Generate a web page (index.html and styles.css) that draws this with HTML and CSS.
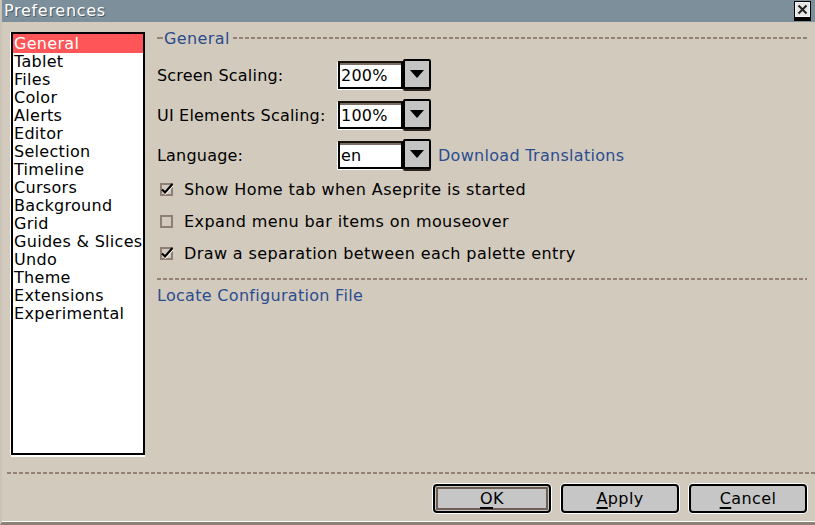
FILE: index.html
```html
<!DOCTYPE html>
<html lang="en">
<head>
    <meta charset="UTF-8">
    <title>Preferences</title>
    <link rel="stylesheet" href="styles.css">
</head>
<body>
    <div class="window">
        <!-- Title bar -->
        <div class="titlebar">
            <span class="title">Preferences</span>
            <span class="close">
                <svg width="18" height="20" viewBox="0 0 18 20">
                    <rect x="0" y="2" width="17" height="18" fill="#000"/>
                    <rect x="0.5" y="0.5" width="16" height="16" fill="#f4f4f4" stroke="#000"/>
                    <rect x="2" y="2" width="13" height="13" fill="#e6e6e6"/>
                    <path d="M4.5 4.5 L12.5 12.5 M12.5 4.5 L4.5 12.5" stroke="#222" stroke-width="2"/>
                </svg>
            </span>
        </div>

        <div class="content">
            <ul class="sections">
                <li class="selected">General</li>
                <li>Tablet</li>
                <li>Files</li>
                <li>Color</li>
                <li>Alerts</li>
                <li>Editor</li>
                <li>Selection</li>
                <li>Timeline</li>
                <li>Cursors</li>
                <li>Background</li>
                <li>Grid</li>
                <li>Guides &amp; Slices</li>
                <li>Undo</li>
                <li>Theme</li>
                <li>Extensions</li>
                <li>Experimental</li>
            </ul>

            <div class="panel">
                <div class="group-title"><span>General</span></div>

                <div class="form">
                    <label>Screen Scaling:</label>
                    <div class="combo">
                        <span class="entry">200%</span>
                        <span class="drop"><svg width="14" height="8" viewBox="0 0 14 8"><polygon points="0,0 14,0 7,8" fill="#000"/></svg></span>
                    </div>
                    <span></span>

                    <label>UI Elements Scaling:</label>
                    <div class="combo">
                        <span class="entry">100%</span>
                        <span class="drop"><svg width="14" height="8" viewBox="0 0 14 8"><polygon points="0,0 14,0 7,8" fill="#000"/></svg></span>
                    </div>
                    <span></span>

                    <label>Language:</label>
                    <div class="combo">
                        <span class="entry">en</span>
                        <span class="drop"><svg width="14" height="8" viewBox="0 0 14 8"><polygon points="0,0 14,0 7,8" fill="#000"/></svg></span>
                    </div>
                    <a class="link" href="#">Download Translations</a>
                </div>

                <div class="checks">
                    <div class="check">
                        <svg class="box" width="16" height="16" viewBox="0 0 16 16">
                            <rect x="2" y="3" width="11" height="11" fill="none" stroke="#8e7e73" stroke-width="2"/>
                            <path d="M3.5 9.5 L6.5 12.5 L14 4" fill="none" stroke="#fff" stroke-width="2"/>
                            <path d="M3 8.5 L6 11.5 L13.5 3" fill="none" stroke="#000" stroke-width="2.2"/>
                        </svg>
                        <span>Show Home tab when Aseprite is started</span>
                    </div>
                    <div class="check">
                        <svg class="box" width="16" height="16" viewBox="0 0 16 16">
                            <rect x="2" y="3" width="11" height="11" fill="none" stroke="#8e7e73" stroke-width="2"/>
                        </svg>
                        <span>Expand menu bar items on mouseover</span>
                    </div>
                    <div class="check">
                        <svg class="box" width="16" height="16" viewBox="0 0 16 16">
                            <rect x="2" y="3" width="11" height="11" fill="none" stroke="#8e7e73" stroke-width="2"/>
                            <path d="M3.5 9.5 L6.5 12.5 L14 4" fill="none" stroke="#fff" stroke-width="2"/>
                            <path d="M3 8.5 L6 11.5 L13.5 3" fill="none" stroke="#000" stroke-width="2.2"/>
                        </svg>
                        <span>Draw a separation between each palette entry</span>
                    </div>
                </div>

                <div class="sep"></div>

                <a class="link locate" href="#">Locate Configuration File</a>
            </div>
        </div>

        <div class="sep footer-sep"></div>

        <div class="buttons">
            <button class="btn focused"><u>O</u>K</button>
            <button class="btn"><u>A</u>pply</button>
            <button class="btn"><u>C</u>ancel</button>
        </div>
    </div>
</body>
</html>
```

FILE: styles.css
```css
/* Global */
body {
    margin: 0;
    padding: 0;
    font-family: "DejaVu Sans", "Liberation Sans", sans-serif;
    font-size: 16px;
    color: #000;
    background-color: #d2cabd;
}

.window {
    width: 815px;
    height: 525px;
    box-sizing: border-box;
    background-color: #d2cabd;
    border-left: 2px solid #cbc3b6;
    border-bottom: 3px solid #8f8076;
    box-shadow: inset 0 -1px 0 #fff;
    display: flex;
    flex-direction: column;
    overflow: hidden;
}

/* Title bar */
.titlebar {
    height: 22px;
    margin-left: -2px;
    background-color: #7d8f9a;
    display: flex;
    align-items: center;
    justify-content: space-between;
    padding: 0 3px 0 4px;
}

.title {
    color: #fff;
    letter-spacing: 0.7px;
    text-shadow: 1px 1px 0 #4e5b63;
    line-height: 22px;
}

.close {
    display: flex;
    align-self: flex-start;
    margin-top: 1px;
}

/* Content */
.content {
    display: flex;
    height: 435px;
    box-sizing: border-box;
    padding: 10px 0 0 9px;
    gap: 12px;
}

.sections {
    list-style: none;
    margin: 0;
    padding: 0;
    width: 134px;
    height: 423px;
    box-sizing: border-box;
    background-color: #fff;
    border: 2px solid #000;
    box-shadow: -1px 0 0 #fff, 0 2px 0 #fff;
}

.sections li {
    height: 18px;
    line-height: 20px;
    padding-left: 1px;
    letter-spacing: 0.3px;
}

.sections li.selected {
    height: 19px;
    margin-bottom: -1px;
    background-color: #fe5658;
    color: #fff;
}

/* Right panel */
.panel {
    width: 650px;
    margin-top: -2px;
}

.group-title {
    display: flex;
    align-items: center;
    height: 16px;
    color: #2b4a8c;
    letter-spacing: 0.4px;
}

.group-title::before {
    content: "";
    width: 6px;
    height: 2px;
    background-color: #968275;
    margin-right: 1px;
}

.group-title::after {
    content: "";
    flex: 1;
    height: 2px;
    margin-left: 3px;
    background: repeating-linear-gradient(to right, #968275 0 4px, transparent 4px 6px);
}

.form {
    display: grid;
    grid-template-columns: 181px auto 1fr;
    grid-auto-rows: 32px;
    row-gap: 8px;
    align-items: center;
    margin-top: 13px;
    letter-spacing: 0.2px;
}

.combo {
    display: flex;
    align-items: flex-start;
    height: 32px;
}

.entry {
    width: 65px;
    height: 28px;
    margin-top: 2px;
    box-sizing: border-box;
    background-color: #fff;
    border: 2px solid #000;
    border-top-color: #1a1411;
    box-shadow: inset 0 2px 0 #7d6c61, -1px 1px 0 #fff;
    padding: 4px 0 0 1px;
    line-height: 18px;
}

.drop {
    width: 28px;
    height: 30px;
    box-sizing: border-box;
    background-color: #c4c4c4;
    border: 2px solid #000;
    border-radius: 2px;
    box-shadow: 0 2px 0 #2b2420;
    display: flex;
    align-items: center;
    justify-content: center;
}

.link {
    color: #2b4d90;
    text-decoration: none;
    letter-spacing: 0.3px;
}

.form .link {
    margin-left: 7px;
}

/* Checkboxes */
.checks {
    margin-top: 8px;
    display: flex;
    flex-direction: column;
    gap: 12px;
}

.check {
    display: flex;
    align-items: center;
    height: 20px;
    letter-spacing: 0.4px;
}

.check .box {
    margin-left: 2px;
    margin-right: 9px;
}

/* Separators */
.sep {
    height: 2px;
    background: repeating-linear-gradient(to right, #968275 0 4px, transparent 4px 6px);
}

.panel .sep {
    margin-top: 15px;
}

.locate {
    display: block;
    margin-top: 8px;
    line-height: 16px;
}

.footer-sep {
    margin: 15px 0 0 5px;
}

/* Buttons */
.buttons {
    display: flex;
    justify-content: flex-end;
    gap: 10px;
    margin-top: 10px;
    padding-right: 8px;
}

.btn {
    width: 118px;
    height: 29px;
    font-family: inherit;
    font-size: 16px;
    letter-spacing: 0.4px;
    color: #000;
    background-color: #c6c6c6;
    border: 2px solid #000;
    border-radius: 4px;
    box-shadow: 0 0 0 1px #fff;
    padding: 0;
    cursor: pointer;
}

.btn.focused {
    box-shadow: inset 0 0 0 1px #c6c6c6, inset 0 0 0 3px #6e5d53, 0 0 0 1px #fff;
}

.btn u {
    text-decoration-thickness: 2px;
    text-underline-offset: 3px;
}
```
